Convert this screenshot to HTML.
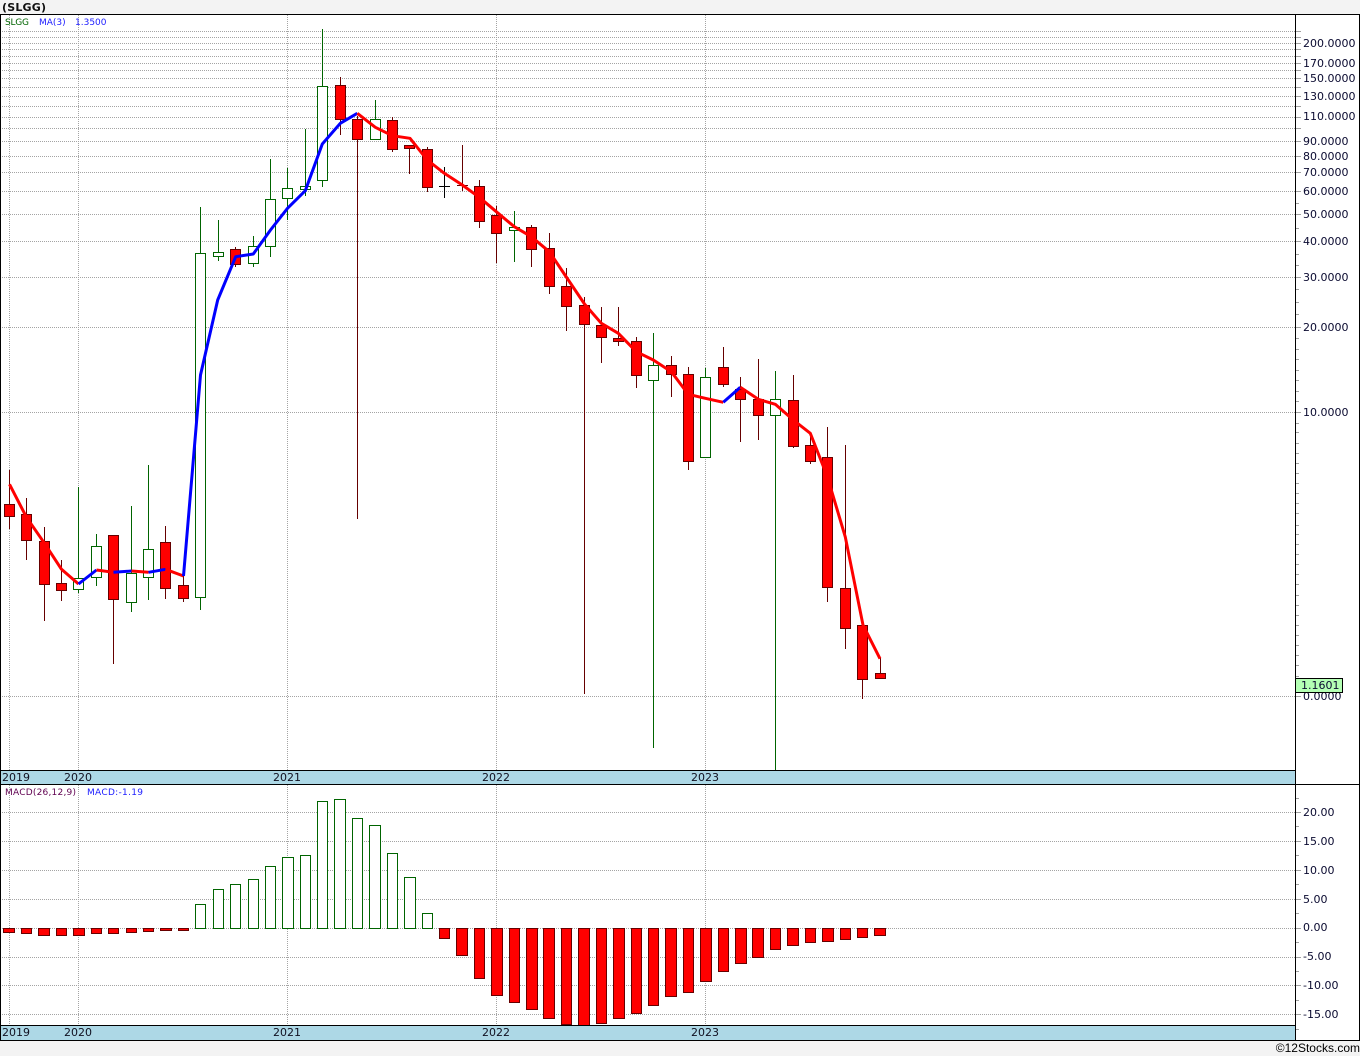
<!DOCTYPE html>
<html><head><meta charset="utf-8"><title>SLGG</title>
<style>
html,body{margin:0;padding:0;background:#f3f3f3;width:1360px;height:1056px;overflow:hidden}
svg{display:block}
text{font-family:"DejaVu Sans","Liberation Sans",sans-serif}
.ax text{font-size:11px;fill:#0a0a30}
.yr text{font-size:11px;fill:#101020}
</style></head><body>
<svg width="1360" height="1056" viewBox="0 0 1360 1056" xmlns="http://www.w3.org/2000/svg">
<rect x="0" y="0" width="1360" height="1056" fill="#f3f3f3"/>
<rect x="0" y="14" width="1360" height="1027" fill="#fff"/>

<!-- grid -->
<g shape-rendering="crispEdges" fill="none" stroke="#a4a4a4" stroke-width="1" stroke-dasharray="1 1">
<path d="M0 31.5H1295M0 37.5H1295M0 43.5H1295M0 49.5H1295M0 56.5H1295M0 63.5H1295M0 70.5H1295M0 78.5H1295M0 87.5H1295M0 96.5H1295M0 106.5H1295M0 117.5H1295M0 128.5H1295M0 141.5H1295M0 156.5H1295M0 172.5H1295M0 191.5H1295M0 214.5H1295M0 241.5H1295M0 277.5H1295M0 327.5H1295M0 412.5H1295M0 696.5H1295"/>
<path d="M0 812.5H1295M0 841.5H1295M0 870.5H1295M0 899.5H1295M0 928.5H1295M0 957.5H1295M0 985.5H1295M0 1014.5H1295"/>
<path d="M9.5 15V770M78.5 15V770M287.5 15V770M496.5 15V770M705.5 15V770M9.5 785V1025M78.5 785V1025M287.5 785V1025M496.5 785V1025M705.5 785V1025"/>
</g>

<!-- wicks -->
<g shape-rendering="crispEdges" fill="none" stroke-width="1">
<path stroke="#660000" d="M9.5 470V529M26.5 498V560M44.5 527V621M61.5 560V601M113.5 535V664M165.5 526V599M183.5 576V602M235.5 247V267M340.5 77V135M357.5 116V519M392.5 117V152M409.5 145V174M427.5 147V192M462.5 145V191M479.5 180V228M496.5 206V263M531.5 225V267M549.5 233V294M566.5 268V331M584.5 297V694M601.5 307V363M618.5 307V346M636.5 337V388M671.5 356V397M688.5 367V470M723.5 347V387M740.5 377V442M758.5 359V440M793.5 375V448M810.5 433V464M827.5 427V602M845.5 445V649M862.5 625V699M880.5 658V674"/>
<path stroke="#006400" d="M78.5 487V593M96.5 534V586M131.5 506V612M148.5 465V600M200.5 207V610M218.5 220V261M253.5 236V267M270.5 159V257M287.5 168V220M305.5 129V196M322.5 29V187M375.5 100V139M514.5 211V262M653.5 333V748M705.5 368V457M775.5 371V770"/>
<path stroke="#000" d="M444.5 167V198M439 186.5H450"/>
<path stroke="#660000" d="M457 185.5H468"/>
</g>

<!-- red bodies -->
<g shape-rendering="crispEdges" fill="#ff0000" stroke="#660000" stroke-width="1">
<rect x="4.5" y="504.5" width="10" height="12"/>
<rect x="21.5" y="514.5" width="10" height="26"/>
<rect x="39.5" y="541.5" width="10" height="43"/>
<rect x="56.5" y="583.5" width="10" height="7"/>
<rect x="108.5" y="535.5" width="10" height="64"/>
<rect x="160.5" y="542.5" width="10" height="46"/>
<rect x="178.5" y="585.5" width="10" height="13"/>
<rect x="230.5" y="249.5" width="10" height="15"/>
<rect x="335.5" y="85.5" width="10" height="34"/>
<rect x="352.5" y="119.5" width="10" height="20"/>
<rect x="387.5" y="120.5" width="10" height="29"/>
<rect x="404.5" y="145.5" width="10" height="3"/>
<rect x="422.5" y="149.5" width="10" height="38"/>
<rect x="474.5" y="186.5" width="10" height="35"/>
<rect x="491.5" y="215.5" width="10" height="18"/>
<rect x="526.5" y="227.5" width="10" height="22"/>
<rect x="544.5" y="248.5" width="10" height="38"/>
<rect x="561.5" y="286.5" width="10" height="20"/>
<rect x="579.5" y="305.5" width="10" height="19"/>
<rect x="596.5" y="325.5" width="10" height="12"/>
<rect x="613.5" y="338.5" width="10" height="3"/>
<rect x="631.5" y="341.5" width="10" height="34"/>
<rect x="666.5" y="365.5" width="10" height="9"/>
<rect x="683.5" y="374.5" width="10" height="87"/>
<rect x="718.5" y="367.5" width="10" height="17"/>
<rect x="735.5" y="389.5" width="10" height="10"/>
<rect x="753.5" y="399.5" width="10" height="16"/>
<rect x="788.5" y="400.5" width="10" height="46"/>
<rect x="805.5" y="445.5" width="10" height="16"/>
<rect x="822.5" y="457.5" width="10" height="130"/>
<rect x="840.5" y="588.5" width="10" height="40"/>
<rect x="857.5" y="625.5" width="10" height="54"/>
<rect x="875.5" y="673.5" width="10" height="5"/>
</g>

<!-- green bodies -->
<g shape-rendering="crispEdges" fill="#fff" stroke="#006400" stroke-width="1">
<rect x="73.5" y="578.5" width="10" height="11"/>
<rect x="91.5" y="546.5" width="10" height="31"/>
<rect x="126.5" y="573.5" width="10" height="29"/>
<rect x="143.5" y="549.5" width="10" height="28"/>
<rect x="195.5" y="253.5" width="10" height="344"/>
<rect x="213.5" y="252.5" width="10" height="4"/>
<rect x="248.5" y="246.5" width="10" height="17"/>
<rect x="265.5" y="199.5" width="10" height="47"/>
<rect x="282.5" y="188.5" width="10" height="10"/>
<rect x="300.5" y="186.5" width="10" height="3"/>
<rect x="317.5" y="86.5" width="10" height="94"/>
<rect x="370.5" y="119.5" width="10" height="20"/>
<rect x="509.5" y="227.5" width="10" height="3"/>
<rect x="648.5" y="365.5" width="10" height="15"/>
<rect x="700.5" y="377.5" width="10" height="80"/>
<rect x="770.5" y="399.5" width="10" height="16"/>
</g>

<!-- MA(3) line -->
<g fill="none" stroke-width="3" stroke-linejoin="round" stroke-linecap="butt">
<polyline stroke="#ff0000" points="9.5,484.3 26.5,517.3 44.5,543.3 61.5,569.3 78.5,584"/>
<polyline stroke="#0000ff" points="78.5,584 96.5,570"/>
<polyline stroke="#ff0000" points="96.5,570 113.5,572.3"/>
<polyline stroke="#0000ff" points="113.5,572.3 131.5,571"/>
<polyline stroke="#ff0000" points="131.5,571 148.5,572.3"/>
<polyline stroke="#0000ff" points="148.5,572.3 165.5,569.3"/>
<polyline stroke="#ff0000" points="165.5,569.3 183.5,576"/>
<polyline stroke="#0000ff" points="183.5,576 200.5,375 217.7,300 235.7,256.7 253.3,254 270.5,230 287.5,208.3 305.3,190.7 322.3,144 340.3,123.3 357.3,113.3"/>
<polyline stroke="#ff0000" points="357.3,113.3 375.3,127.3 392.3,135.7 410,138.3 427.3,160 444.3,173.3 462.3,185 479.3,197.3 496.3,211.7 514.3,226.7 531.3,236.7 549.3,251.7 566.3,277 584.5,304 601.3,323.3 618.3,333.3 636.3,351.7 653.3,360 671.3,371.7 688.3,394.3 705.3,398.3 723.3,402.3"/>
<polyline stroke="#0000ff" points="723.3,402.3 740.3,387.3"/>
<polyline stroke="#ff0000" points="740.3,387.3 758.3,399.3 775.3,404.3 793.3,420 810.3,433.3 827.3,476.5 845.3,537 863,625 880,658.7"/>
</g>

<!-- MACD green -->
<g shape-rendering="crispEdges" fill="#fff" stroke="#006400" stroke-width="1">
<rect x="195.5" y="904.5" width="10" height="24"/>
<rect x="213.5" y="889.5" width="10" height="39"/>
<rect x="230.5" y="884.5" width="10" height="44"/>
<rect x="248.5" y="879.5" width="10" height="49"/>
<rect x="265.5" y="866.5" width="10" height="62"/>
<rect x="282.5" y="857.5" width="11" height="71"/>
<rect x="300.5" y="855.5" width="10" height="73"/>
<rect x="317.5" y="801.5" width="10" height="127"/>
<rect x="334.5" y="799.5" width="11" height="129"/>
<rect x="352.5" y="818.5" width="10" height="110"/>
<rect x="369.5" y="825.5" width="11" height="103"/>
<rect x="387.5" y="853.5" width="10" height="75"/>
<rect x="404.5" y="877.5" width="11" height="51"/>
<rect x="422.5" y="913.5" width="10" height="15"/>
</g>
<!-- MACD red -->
<g shape-rendering="crispEdges" fill="#ff0000" stroke="#660000" stroke-width="1">
<rect x="3.5" y="928.5" width="11" height="4"/>
<rect x="21.5" y="928.5" width="10" height="5"/>
<rect x="38.5" y="928.5" width="11" height="7"/>
<rect x="56.5" y="928.5" width="10" height="7"/>
<rect x="73.5" y="928.5" width="11" height="7"/>
<rect x="91.5" y="928.5" width="10" height="5"/>
<rect x="108.5" y="928.5" width="10" height="5"/>
<rect x="126.5" y="928.5" width="10" height="4"/>
<rect x="143.5" y="928.5" width="10" height="3"/>
<rect x="160.5" y="928.5" width="11" height="2"/>
<rect x="178.5" y="928.5" width="10" height="2"/>
<rect x="439.5" y="928.5" width="10" height="10"/>
<rect x="456.5" y="928.5" width="11" height="27"/>
<rect x="474.5" y="928.5" width="10" height="50"/>
<rect x="491.5" y="928.5" width="11" height="67"/>
<rect x="509.5" y="928.5" width="10" height="74"/>
<rect x="526.5" y="928.5" width="11" height="81"/>
<rect x="543.5" y="928.5" width="11" height="90"/>
<rect x="561.5" y="928.5" width="10" height="96"/>
<rect x="578.5" y="928.5" width="11" height="97"/>
<rect x="596.5" y="928.5" width="10" height="95"/>
<rect x="613.5" y="928.5" width="11" height="90"/>
<rect x="631.5" y="928.5" width="10" height="85"/>
<rect x="648.5" y="928.5" width="10" height="77"/>
<rect x="665.5" y="928.5" width="11" height="68"/>
<rect x="683.5" y="928.5" width="10" height="64"/>
<rect x="700.5" y="928.5" width="11" height="53"/>
<rect x="718.5" y="928.5" width="10" height="43"/>
<rect x="735.5" y="928.5" width="11" height="35"/>
<rect x="752.5" y="928.5" width="11" height="29"/>
<rect x="770.5" y="928.5" width="10" height="21"/>
<rect x="787.5" y="928.5" width="11" height="17"/>
<rect x="805.5" y="928.5" width="10" height="14"/>
<rect x="822.5" y="928.5" width="11" height="13"/>
<rect x="840.5" y="928.5" width="10" height="11"/>
<rect x="857.5" y="928.5" width="10" height="9"/>
<rect x="874.5" y="928.5" width="11" height="7"/>
</g>

<!-- year bands -->
<rect x="0" y="770" width="1295" height="15" fill="#add8e6"/>
<rect x="0" y="1025" width="1295" height="15" fill="#add8e6"/>

<!-- axis ticks -->
<g shape-rendering="crispEdges" fill="none" stroke="#a0a0a0" stroke-width="1">
<path d="M1296 31.5h5M1296 37.5h5M1296 43.5h5M1296 49.5h5M1296 56.5h5M1296 63.5h5M1296 70.5h5M1296 78.5h5M1296 87.5h5M1296 96.5h5M1296 106.5h5M1296 117.5h5M1296 128.5h5M1296 141.5h5M1296 156.5h5M1296 172.5h5M1296 191.5h5M1296 214.5h5M1296 241.5h5M1296 277.5h5M1296 327.5h5M1296 412.5h5M1296 696.5h5"/>
<path d="M1296 203.5h3M1296 228.5h3M1296 254.5h3M1296 265.5h3M1296 289.5h3M1296 302.5h3M1296 314.5h3M1296 338.5h3M1296 349.5h3M1296 359.5h3M1296 370.5h3M1296 380.5h3M1296 391.5h3M1296 401.5h3M1296 423.5h3M1296 432.5h3M1296 443.5h3M1296 453.5h3M1296 463.5h3M1296 473.5h3M1296 483.5h3M1296 493.5h3M1296 503.5h3M1296 513.5h3M1296 525.5h3M1296 534.5h3M1296 544.5h3M1296 554.5h3M1296 564.5h3M1296 574.5h3M1296 584.5h3M1296 595.5h3M1296 605.5h3M1296 615.5h3M1296 625.5h3M1296 635.5h3M1296 645.5h3M1296 655.5h3M1296 665.5h3M1296 676.5h3"/>
<path d="M1296 812.5h5M1296 841.5h5M1296 870.5h5M1296 899.5h5M1296 928.5h5M1296 957.5h5M1296 985.5h5M1296 1014.5h5"/>
<path d="M1296 798.5h3M1296 826.5h3M1296 855.5h3M1296 884.5h3M1296 913.5h3M1296 942.5h3M1296 971.5h3M1296 1000.5h3M1296 1029.5h3"/>
</g>

<!-- frame -->
<g shape-rendering="crispEdges" fill="none" stroke="#000" stroke-width="1">
<path d="M0 14.5H1360M0.5 14V1041M1295.5 14V1041M1359.5 14V1041M0 770.5H1295M0 784.5H1360M0 1025.5H1295M0 1040.5H1360"/>
</g>

<!-- labels -->
<text x="2" y="11" font-size="11" font-weight="bold" fill="#111" textLength="44">(SLGG)</text>
<text x="5" y="25" font-size="9" fill="#006400" textLength="24">SLGG</text>
<text x="39" y="25" font-size="9" fill="#2020ff">MA(3)</text>
<text x="75" y="25" font-size="9" fill="#2020ff">1.3500</text>
<text x="5" y="795" font-size="9" fill="#600050" textLength="71">MACD(26,12,9)</text>
<text x="87" y="795" font-size="9" fill="#2020ff" textLength="56">MACD:-1.19</text>

<g class="yr">
<text x="2" y="781">2019</text><text x="64" y="781">2020</text><text x="273" y="781">2021</text><text x="482" y="781">2022</text><text x="691" y="781">2023</text>
<text x="2" y="1036">2019</text><text x="64" y="1036">2020</text><text x="273" y="1036">2021</text><text x="482" y="1036">2022</text><text x="691" y="1036">2023</text>
</g>

<g class="ax">
<text x="1303" y="47">200.0000</text>
<text x="1303" y="67">170.0000</text>
<text x="1303" y="82">150.0000</text>
<text x="1303" y="100">130.0000</text>
<text x="1303" y="120">110.0000</text>
<text x="1303" y="145">90.0000</text>
<text x="1303" y="160">80.0000</text>
<text x="1303" y="176">70.0000</text>
<text x="1303" y="195">60.0000</text>
<text x="1303" y="218">50.0000</text>
<text x="1303" y="245">40.0000</text>
<text x="1303" y="281">30.0000</text>
<text x="1303" y="331">20.0000</text>
<text x="1303" y="416">10.0000</text>
<text x="1303" y="700">0.0000</text>
<text x="1303" y="816">20.00</text>
<text x="1303" y="845">15.00</text>
<text x="1303" y="874">10.00</text>
<text x="1303" y="903">5.00</text>
<text x="1303" y="931">0.00</text>
<text x="1303" y="960">-5.00</text>
<text x="1303" y="989">-10.00</text>
<text x="1303" y="1018">-15.00</text>
</g>

<!-- last price -->
<rect x="1295.5" y="678.5" width="47" height="14" fill="#b4ffb4" stroke="#000" stroke-width="1" shape-rendering="crispEdges"/>
<text x="1301" y="689" font-size="11" fill="#0a0a30">1.1601</text>

<text x="1360" y="1052" text-anchor="end" font-size="12" fill="#000" style="font-family:'Liberation Sans',sans-serif">©12Stocks.com</text>
</svg>
</body></html>
